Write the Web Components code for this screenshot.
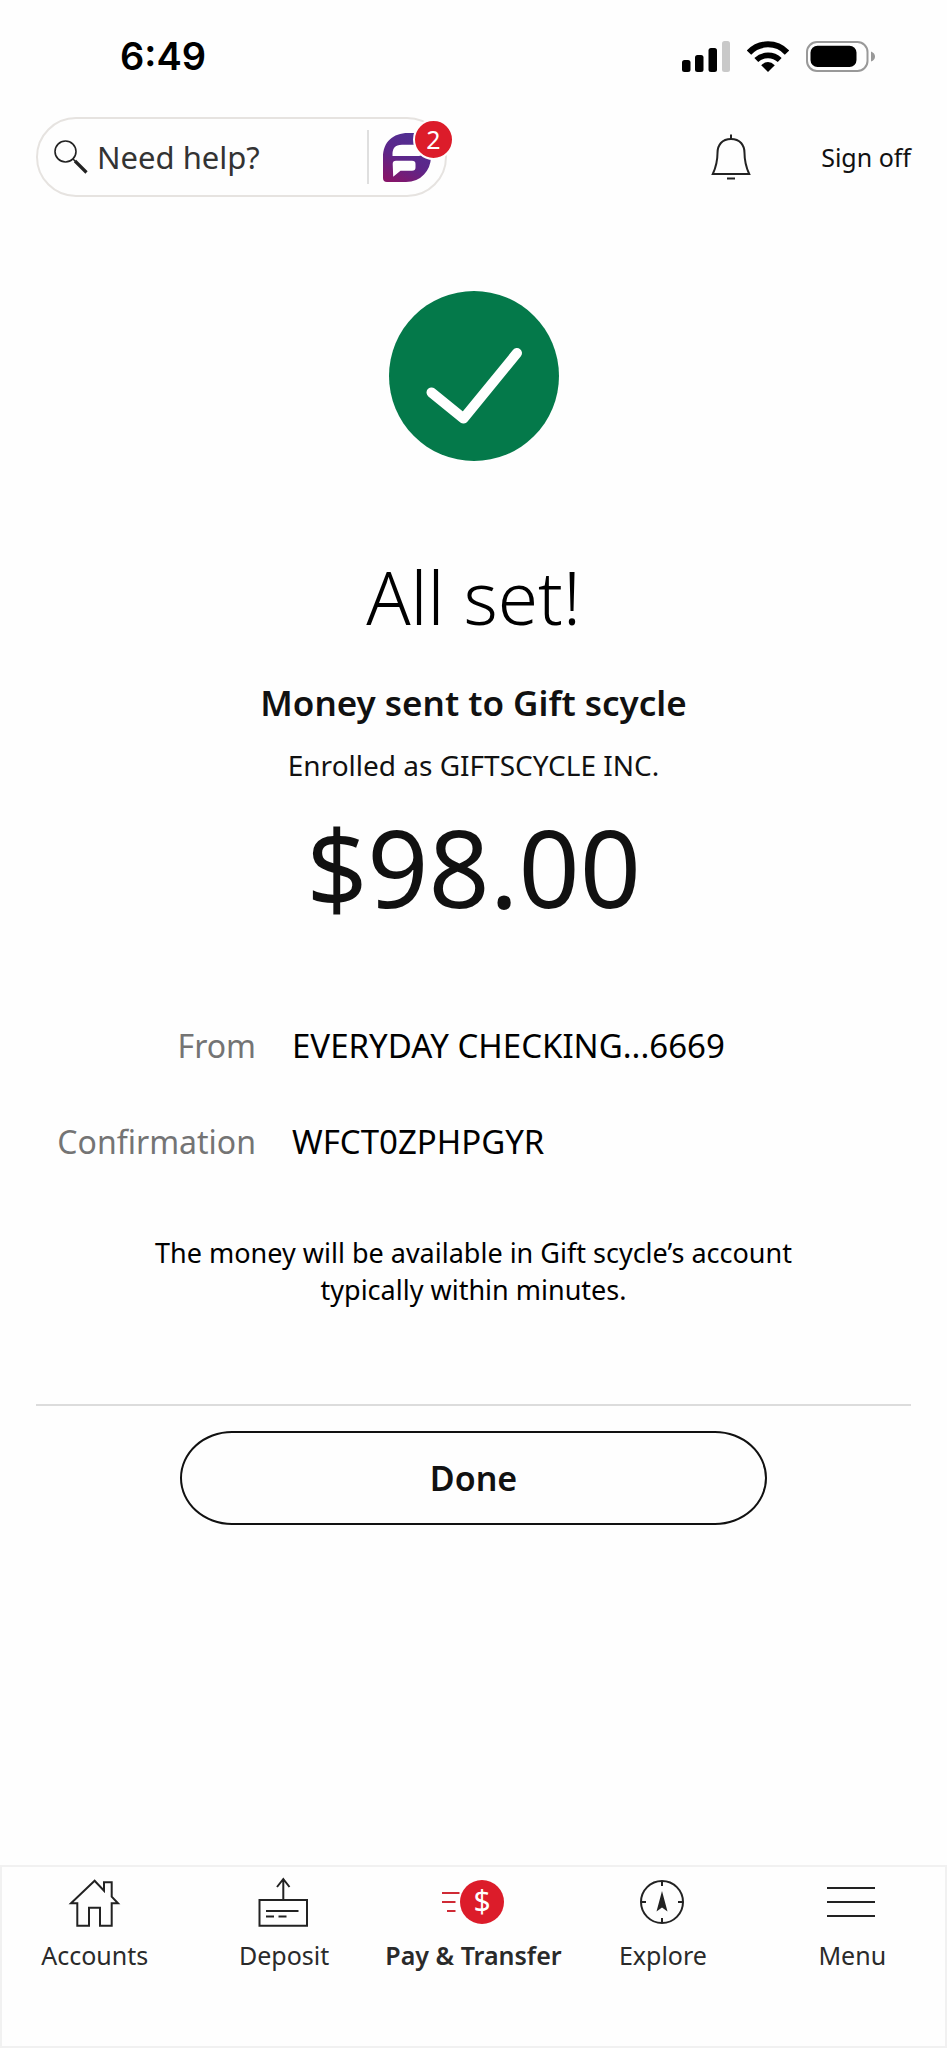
<!DOCTYPE html>
<html lang="en">
<head>
<meta charset="utf-8">
<meta name="viewport" content="width=device-width, initial-scale=1">
<title>Payment sent</title>
<style>
  html, body { margin: 0; padding: 0; }
  body { background: #fefefe; color: #111; font-family: "Noto Sans", sans-serif; }
</style>
</head>
<body>
<bank-app>
  <status-bar slot="status" time="6:49"></status-bar>
  <help-header slot="header" messages="2"></help-header>
  <payment-receipt>
    <span slot="title">All set!</span>
    <span slot="recipient">Money sent to Gift scycle</span>
    <span slot="enrolled">Enrolled as GIFTSCYCLE INC.</span>
    <span slot="amount">$98.00</span>
    <detail-row slot="details" label="From">EVERYDAY CHECKING...6669</detail-row>
    <detail-row slot="details" label="Confirmation">WFCT0ZPHPGYR</detail-row>
    <span slot="note">The money will be available in Gift scycle’s account typically within minutes.</span>
    <pill-button slot="action">Done</pill-button>
  </payment-receipt>
  <tab-bar slot="tabs">
    <tab-item icon="accounts">Accounts</tab-item>
    <tab-item icon="deposit">Deposit</tab-item>
    <tab-item icon="pay" current>Pay &amp; Transfer</tab-item>
    <tab-item icon="explore">Explore</tab-item>
    <tab-item icon="menu">Menu</tab-item>
  </tab-bar>
</bank-app>

<script>
  const define = (name, render) => customElements.define(name, class extends HTMLElement {
    constructor() {
      super();
      this.attachShadow({ mode: 'open' });
    }
    connectedCallback() {
      this.shadowRoot.innerHTML = render(this);
    }
  });

  define('bank-app', () => `
    <style>
      :host { display: flex; flex-direction: column; min-height: 100vh; }
      main { flex: 1; }
    </style>
    <slot name="status"></slot>
    <slot name="header"></slot>
    <main><slot></slot></main>
    <slot name="tabs"></slot>`);

  define('status-bar', el => `
    <style>
      :host { display: flex; align-items: center; justify-content: space-between; height: 112px; padding: 0 72px 0 120px; color: #000; }
      time { font: 600 38px/48px Inter, sans-serif; }
      .icons { display: flex; align-items: center; gap: 17px; }
      svg { display: block; }
    </style>
    <time>${el.getAttribute('time')}</time>
    <div class="icons">
      <svg width="48" height="31" viewBox="0 0 48 31" role="img" aria-label="Signal">
        <rect x="0" y="19" width="8.5" height="12" rx="2.5"/>
        <rect x="13" y="14" width="8.5" height="17" rx="2.5"/>
        <rect x="26.5" y="7" width="8.5" height="24" rx="2.5"/>
        <rect x="40" y="0" width="8" height="31" rx="2.5" fill="#c9c9c9"/>
      </svg>
      <svg width="42" height="31" viewBox="0 0 42 31" role="img" aria-label="Wi-Fi">
        <g fill="none" stroke="#000">
          <path d="M2 11.6A26 26 0 0 1 40 11.6" stroke-width="6"/>
          <path d="M9.3 19A17 17 0 0 1 32.7 19" stroke-width="5.6"/>
        </g>
        <path d="M14.2 24.2Q21 17.8 27.8 24.2L21 31Z"/>
      </svg>
      <svg width="69" height="31" viewBox="0 0 69 31" role="img" aria-label="Battery">
        <rect x="1" y="1" width="60.500" height="29" rx="10" fill="none" stroke="#999" stroke-width="2"/>
        <rect x="4.500" y="4.700" width="46" height="21.300" rx="7"/>
        <path d="M65 10.500Q69 12 69 15.500T65 20.500Z" fill="#999"/>
      </svg>
    </div>`);

  define('help-header', el => `
    <style>
      :host { display: flex; align-items: center; height: 90px; padding: 0 36px; }
      .search { box-sizing: border-box; display: flex; align-items: center; flex: 0 1 411px; min-width: 0; height: 80px; padding: 0 14px 0 16px; border: 2px solid #e6e3e0; border-radius: 40px; }
      svg { display: block; flex: none; }
      input { flex: 1; min-width: 0; height: 48px; margin: 0 0 0 9px; padding: 0; border: 0; outline: 0; background: none; color: #333; font: 31px/48px "Noto Sans", sans-serif; appearance: none; }
      input::placeholder { color: #333; opacity: 1; }
      button { position: relative; flex: none; padding: 0; border: 0; background: none; color: inherit; cursor: pointer; }
      .chat { padding-left: 14px; }
      .rule { flex: none; width: 2px; height: 54px; background: #dfdfdf; }
      .badge { position: absolute; right: -23px; top: -14px; width: 37px; height: 37px; border: 2px solid #fefefe; border-radius: 50%; background: #dc1c2a; color: #fff; font: 25px/37px "Noto Sans", sans-serif; text-align: center; }
      .bell { margin-left: auto; }
      a { margin-left: 70px; color: #111; font-size: 25px; line-height: 36px; text-decoration: none; white-space: nowrap; }
    </style>
    <div class="search">
      <svg width="34" height="34" viewBox="0 0 34 34" fill="none" stroke="#222" aria-hidden="true">
        <circle cx="11.500" cy="11.500" r="10.500" stroke-width="1.600"/>
        <path d="M19 19L22 22" stroke-width="1.600"/>
        <path d="M21 21L32.500 32.500" stroke-width="3.200"/>
      </svg>
      <input type="search" placeholder="Need help?" aria-label="Need help?">
      <span class="rule"></span>
      <button class="chat" aria-label="Assistant messages">
        <svg width="48" height="49" viewBox="0 0 48 49" aria-hidden="true">
          <defs>
            <linearGradient id="brand" x1="0.700" y1="0" x2="0.200" y2="1">
              <stop offset="0" stop-color="#4f3093"/>
              <stop offset="0.550" stop-color="#5d2589"/>
              <stop offset="1" stop-color="#861569"/>
            </linearGradient>
          </defs>
          <path fill="url(#brand)" d="M0 45V24C0 9 10 0 25 0H48V22Q48.300 34 41 41.500Q34 49 23 49H4Q0 49 0 45Z"/>
          <path fill="#fefefe" d="M9.500 23C9 15 12 11.700 19 11.700H48V20L36 23Z"/>
          <path fill="#fefefe" d="M9.700 31Q9.700 27.700 13 27.700H29Q32.500 27.700 32.500 31V34.500Q32.500 37.800 29 37.800H17.500L10.200 43.800Z"/>
        </svg>
        <span class="badge">${el.getAttribute('messages')}</span>
      </button>
    </div>
    <button class="bell" aria-label="Notifications">
      <svg width="40" height="48" viewBox="0 0 40 48" fill="none" stroke="#222" stroke-width="2" aria-hidden="true">
        <path d="M20 1.500V6M16 45.500H24"/>
        <path d="M20 6C11 6 6.500 12 6.500 20C6.500 28 5 34 1.800 41H38.200C35 34 33.500 28 33.500 20C33.500 12 29 6 20 6Z"/>
      </svg>
    </button>
    <a href="#sign-off">Sign off</a>`);

  define('payment-receipt', () => `
    <style>
      :host { display: flex; flex-direction: column; align-items: center; padding: 89px 36px 36px; text-align: center; }
      svg { display: block; }
      h1, h2, p { margin: 0; }
      h1 { margin-top: 94px; font-size: 73px; line-height: 84px; font-weight: 300; color: #000; }
      h2 { margin-top: 40px; font-size: 35px; line-height: 48px; font-weight: 600; }
      .enrolled { margin-top: 20px; font-size: 28px; line-height: 36px; }
      .amount { margin-top: 20px; font-size: 107px; line-height: 128px; }
      .details { display: flex; flex-direction: column; gap: 48px; align-self: stretch; margin-top: 91px; text-align: left; }
      .note { max-width: 660px; margin-top: 68px; font-size: 27px; line-height: 37px; color: #000; }
      hr { align-self: stretch; height: 2px; margin: 96px 0 25px; border: 0; background: #dcdcdc; }
      slot[name="action"] { display: block; width: 67%; }
    </style>
    <svg width="170" height="170" viewBox="0 0 170 170" role="img" aria-label="Success">
      <circle cx="85" cy="85" r="85" fill="#04794a"/>
      <path d="M42.500 101.500L74.500 127.500L128 62" fill="none" stroke="#fff" stroke-width="10" stroke-linecap="round" stroke-linejoin="round"/>
    </svg>
    <h1><slot name="title"></slot></h1>
    <h2><slot name="recipient"></slot></h2>
    <p class="enrolled"><slot name="enrolled"></slot></p>
    <p class="amount"><slot name="amount"></slot></p>
    <div class="details"><slot name="details"></slot></div>
    <p class="note"><slot name="note"></slot></p>
    <hr>
    <slot name="action"></slot>`);

  define('detail-row', el => `
    <style>
      :host { display: block; }
      dl { display: grid; grid-template-columns: 220px 1fr; column-gap: 36px; align-items: baseline; margin: 0; line-height: 48px; }
      dt { color: #747474; font-size: 32px; text-align: right; }
      dd { margin: 0; color: #000; font-size: 33px; overflow-wrap: anywhere; }
    </style>
    <dl><dt>${el.getAttribute('label')}</dt><dd><slot></slot></dd></dl>`);

  define('pill-button', () => `
    <style>
      :host { display: block; }
      button { display: block; width: 100%; height: 94px; padding: 0; border: 2px solid #111; border-radius: 52px / 47px; background: none; color: #111; font: 600 34px/48px "Noto Sans", sans-serif; cursor: pointer; }
    </style>
    <button type="button"><slot></slot></button>`);

  define('tab-bar', () => `
    <style>
      :host { display: block; box-shadow: inset 0 0 0 2px #f1f1f1; }
      nav { box-sizing: border-box; display: grid; grid-template-columns: repeat(5, 1fr); min-height: 183px; padding-top: 10px; }
    </style>
    <nav aria-label="Main"><slot></slot></nav>`);

  const icons = {
    accounts: `<path d="M31.600 5.700L8 28.300H14.300V50.700H26V32.700H37V50.700H48.700V28.300H55L48.700 21.700V7.300H41V15.700Z"/>`,
    deposit: `<path d="M7.500 25H55V50.700H7.500ZM31.300 25V4M25 12L31.300 4L37.500 12M14 36H46.500M14 41.500H22M26.500 41.500H34.500"/>`,
    pay: `<g stroke="#cf2a35"><path d="M1 18H18.500M1 27H14.500M6 36H14.500"/></g>
      <circle cx="41" cy="27" r="22" fill="#dc1c2a" stroke="none"/>
      <text x="41" y="37" text-anchor="middle" fill="#fff" stroke="none" font-size="30">$</text>`,
    explore: `<circle cx="31" cy="27" r="21"/><path d="M31 6V11M31 43V48M10 27H15M47 27H52"/>
      <path d="M31 16L36.500 36.500L31 32.500L25.500 36.500Z" fill="#222" stroke="none"/>`,
    menu: `<path d="M7 13H55M7 27H55M7 41H55"/>`
  };

  define('tab-item', el => `
    <style>
      :host { display: block; min-width: 0; }
      a { display: flex; flex-direction: column; align-items: center; gap: 8px; color: #2a2a2a; font-size: 25px; line-height: 32px; font-weight: ${el.hasAttribute('current') ? 600 : 400}; text-decoration: none; white-space: nowrap; }
      svg { display: block; overflow: visible; font-weight: 400; }
    </style>
    <a href="#${el.getAttribute('icon')}" ${el.hasAttribute('current') ? 'aria-current="page"' : ''}>
      <svg width="64" height="56" viewBox="0 0 64 56" fill="none" stroke="#222" stroke-width="2" aria-hidden="true">${icons[el.getAttribute('icon')]}</svg>
      <span><slot></slot></span>
    </a>`);
</script>
</body>
</html>
